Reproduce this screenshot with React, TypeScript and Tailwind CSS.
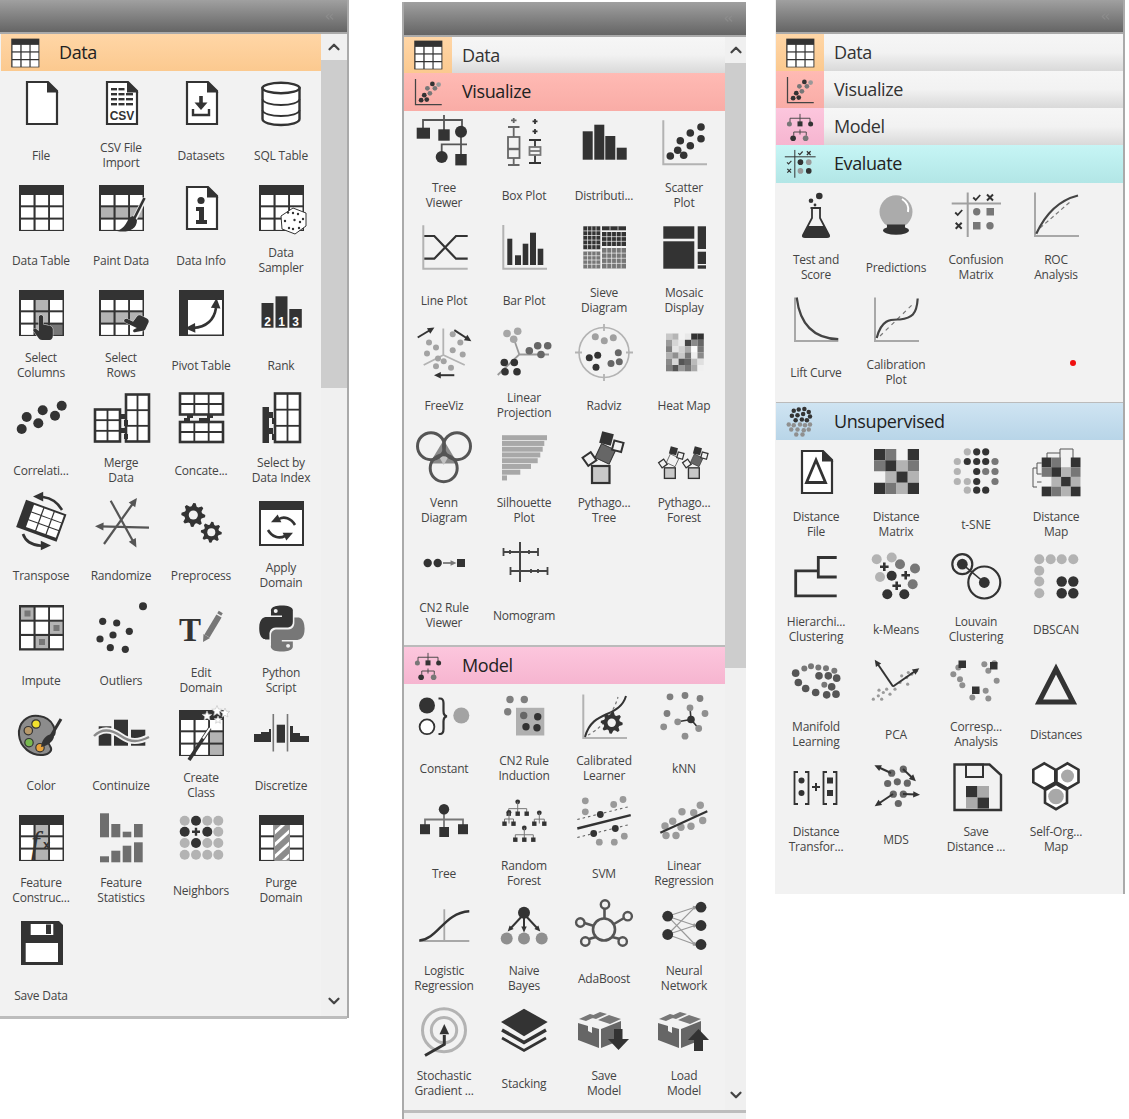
import type { ReactNode } from 'react'
import { ChevronDown, ChevronUp, ChevronsLeft } from 'lucide-react'

const D = '#333333'
const M = '#777777'
const L = '#b3b3b3'
const W = '#ffffff'
const BG = '#f2f2f2'

type Pt = number[]

const R = (x: number, y: number, w: number, h: number, f = D) => <rect x={x} y={y} width={w} height={h} fill={f} />
const C = (x: number, y: number, r: number, f = D) => <circle cx={x} cy={y} r={r} fill={f} />
const S = (d: string, c = D, w = 2, dash?: string) => (
  <path d={d} fill="none" stroke={c} strokeWidth={w} strokeDasharray={dash} />
)
const F = (d: string, f = D) => <path d={d} fill={f} />

// zoomed crop coords -> icon coords
const Z = (cx: number, cy: number, pts: Pt[]) => pts.map(([x, y]) => [(x - cx) / 3 + 24, (y - cy) / 3 + 24])

const dots = (p: Pt[], r = 3.5, f = D) => (
  <>
    {p.map(([x, y], i) => (
      <circle key={i} cx={x} cy={y} r={r} fill={f} />
    ))}
  </>
)

const head = (x: number, y: number, a: number, s = 5, c = D) => (
  <polygon points={`${s},0 ${-s * 0.7},${s * 0.8} ${-s * 0.7},${-s * 0.8}`} fill={c} transform={`translate(${x} ${y}) rotate(${a})`} />
)

const arrow = (x1: number, y1: number, x2: number, y2: number, c = D, w = 2, s = 4) => {
  const a = (Math.atan2(y2 - y1, x2 - x1) * 180) / Math.PI
  return (
    <>
      <line x1={x1} y1={y1} x2={x2} y2={y2} stroke={c} strokeWidth={w} />
      {head(x2, y2, a, s, c)}
    </>
  )
}

const grid = (x: number, y: number, w: number, h: number, cols: number, rows: number, sw = 2.2, fill = W) => (
  <>
    <rect x={x} y={y} width={w} height={h} fill={fill} stroke={D} strokeWidth={sw} />
    {Array.from({ length: cols - 1 }, (_, i) => (
      <line key={i} x1={x + (w * (i + 1)) / cols} x2={x + (w * (i + 1)) / cols} y1={y} y2={y + h} stroke={D} strokeWidth={sw * 0.7} />
    ))}
    {Array.from({ length: rows - 1 }, (_, i) => (
      <line key={i} y1={y + (h * (i + 1)) / rows} y2={y + (h * (i + 1)) / rows} x1={x} x2={x + w} stroke={D} strokeWidth={sw * 0.7} />
    ))}
  </>
)

const mesh = (x: number, y: number, w: number, h: number, n: number, m: number, f: string) => (
  <>
    <rect x={x} y={y} width={w} height={h} fill={f} />
    {Array.from({ length: n - 1 }, (_, i) => (
      <line key={i} x1={x + (w * (i + 1)) / n} x2={x + (w * (i + 1)) / n} y1={y} y2={y + h} stroke={BG} strokeWidth={0.7} />
    ))}
    {Array.from({ length: m - 1 }, (_, i) => (
      <line key={i} y1={y + (h * (i + 1)) / m} y2={y + (h * (i + 1)) / m} x1={x} x2={x + w} stroke={BG} strokeWidth={0.7} />
    ))}
  </>
)

const table = (fills: Record<string, string> = {}, top = true) => {
  const cols = [4, 18.6, 33]
  const rows = top ? [11, 23.3, 35.6] : [3.5, 17.7, 32]
  const h = top ? 10.3 : 12.2
  return (
    <>
      {R(2, 1, 45, top ? 46 : 45.5)}
      {rows.map((y, r) =>
        cols.map((x, c) => <rect key={`${r}${c}`} x={x} y={y} width={12.5} height={h} fill={fills[`${r}${c}`] ?? W} />),
      )}
    </>
  )
}

const fileBase = (
  <>
    <path d="M10 3H31L40 12V45H10Z" fill={W} stroke={D} strokeWidth={2.2} />
    {F('M30 2L41.5 13.5H30Z')}
  </>
)

const hand = (x: number, y: number, a: number, s = 1) => (
  <g transform={`translate(${x} ${y}) rotate(${a}) scale(${s}) translate(-12 -12)`}>
    <path
      d="M9 0c1.3 0 2.2 1 2.2 2.2v7.3l6.3 1.3c2.2.4 3.3 1.6 3.3 3.6V21c0 2.2-1.2 4-3.3 4H10c-1.6 0-2.7-.7-3.5-2L1.5 16c-1-1.4.9-3.2 2.4-2.2L6.8 16V2.2C6.8 1 7.7 0 9 0z"
      fill={D}
      stroke={BG}
      strokeWidth={0.8}
      paintOrder="stroke"
    />
  </g>
)

const gear = (cx: number, cy: number, r: number, n: number, f = D) => {
  const pts: string[] = []
  for (let i = 0; i < n * 4; i++) {
    const a = (i / (n * 4)) * Math.PI * 2
    const rr = i % 4 < 2 ? r : r * 0.74
    pts.push(`${cx + rr * Math.cos(a)},${cy + rr * Math.sin(a)}`)
  }
  return (
    <>
      <polygon points={pts.join(' ')} fill={f} />
      {C(cx, cy, r * 0.38, BG)}
    </>
  )
}

const star = (x: number, y: number, r: number) => {
  const pts: string[] = []
  for (let i = 0; i < 10; i++) {
    const a = -Math.PI / 2 + (i * Math.PI) / 5
    const rr = i % 2 ? r * 0.45 : r
    pts.push(`${x + rr * Math.cos(a)},${y + rr * Math.sin(a)}`)
  }
  return <polygon points={pts.join(' ')} fill={W} stroke="#c4c4c4" strokeWidth={0.7} />
}

const hex = (x: number, y: number, r: number) => {
  const pts: string[] = []
  for (let i = 0; i < 6; i++) {
    const a = -Math.PI / 2 + (i * Math.PI) / 3
    pts.push(`${x + r * Math.cos(a)},${y + r * Math.sin(a)}`)
  }
  return <polygon points={pts.join(' ')} fill={W} stroke={D} strokeWidth={2.6} />
}

const chk = (x: number, y: number) => S(`M${x - 3.5} ${y}l2.5 2.5 4.5-5`, D, 1.8)
const crs = (x: number, y: number) => S(`M${x - 3} ${y - 3}l6 6m0-6l-6 6`, D, 2)

const miniTree = (cx: number, y: number, w: number, y2: number) => (
  <>
    {C(cx, y, 2.4)}
    {S(`M${cx} ${y}V${y2}M${cx - w} ${y2}V${(y + y2) / 2 + 1}H${cx + w}V${y2}`, M, 1)}
    {R(cx - w - 2.2, y2 - 2, 4.4, 4.4)}
    {R(cx + w - 2.2, y2 - 2, 4.4, 4.4)}
  </>
)

const cubePack = (
  <>
    {F('M-1 12L10 7L17 9L6 14ZM20 5L27 7L16 12L9 10ZM29 8L41 12L30 17L18 13Z', M)}
    {F('M-2 16L8 19V24L12 26V20L19 22V41L-2 33Z', '#666666')}
    {F('M21 22L41 14V33L21 41Z', '#666666')}
  </>
)

const pyth = (big: string, mid: string, tip: string) => (
  <>
    <rect x={12} y={32} width={17.5} height={17} fill={big} stroke={D} strokeWidth={2.2} />
    <rect x={17.5} y={12} width={15.5} height={15.5} fill={mid} stroke={D} strokeWidth={1} transform="rotate(25 25 20)" />
    <rect x={20.5} y={-1.5} width={12} height={12} fill={tip} transform="rotate(15 26.5 4.5)" />
    <rect x={33} y={7.5} width={9.5} height={9.5} fill={BG} stroke={D} strokeWidth={2} transform="rotate(15 37.7 12.2)" />
    <rect x={4.5} y={20} width={10} height={10} fill={BG} stroke={D} strokeWidth={2} transform="rotate(-35 9.5 25)" />
  </>
)

const heatCells = [
  ['#c8c8c8', '#b5b5b5', '#f2f2f2', '#e8e8e8', '#333333', '#333333'],
  ['#9a9a9a', '#d5d5d5', '#e8e8e8', '#444444', '#8a8a8a', '#666666'],
  ['#808080', '#e4e4e4', '#d0d0d0', '#aaaaaa', '#fafafa', '#777777'],
  ['#b0b0b0', '#8f8f8f', '#c8c8c8', '#777777', '#eeeeee', '#8a8a8a'],
  ['#8a8a8a', '#d8d8d8', '#555555', '#666666', '#bbbbbb', '#e0e0e0'],
  ['#808080', '#555555', '#999999', '#777777', '#aaaaaa', '#f0f0f0'],
]

const m4 = [
  [D, M, BG, D],
  [M, D, L, M],
  [BG, L, D, L],
  [D, M, L, D],
]

const matrix = (x: number, y: number, s: number) =>
  m4.map((row, r) => row.map((f, c) => <rect key={`${r}${c}`} x={x + c * s} y={y + r * s} width={s} height={s} fill={f} />))

const icons: Record<string, ReactNode> = {
  file: fileBase,
  csv: (
    <>
      {fileBase}
      {[9, 14, 19, 24].map((y) => (
        <g key={y}>
          {R(14, y, 6, 2.4)}
          {R(21.5, y, 6, 2.4)}
          {y > 9 && R(29, y, 7, 2.4)}
        </g>
      ))}
      <text x={25} y={41} textAnchor="middle" fontFamily="Liberation Sans, sans-serif" fontWeight={700} fontSize={12} fill={D}>
        CSV
      </text>
    </>
  ),
  datasets: (
    <>
      {fileBase}
      {R(22.2, 17, 3.6, 7)}
      {F('M17.5 23.5H30.5L24 31Z')}
      {S('M16 30V36H32V30', D, 2.4)}
    </>
  ),
  sql: (
    <>
      <path d="M5.5 9V40C5.5 43.5 14 46 24 46S42.5 43.5 42.5 40V9Z" fill={W} stroke={D} strokeWidth={2.4} />
      <ellipse cx={24} cy={9} rx={18.5} ry={5.2} fill={W} stroke={D} strokeWidth={2.4} />
      {S('M5.5 20C5.5 23.5 14 26 24 26S42.5 23.5 42.5 20', D, 1.8)}
      {S('M5.5 31C5.5 34.5 14 37 24 37S42.5 34.5 42.5 31', D, 1.8)}
    </>
  ),
  dataTable: table(),
  paintData: (
    <>
      {table({ 10: L, 11: L, 12: L })}
      {S('M48 14L37 36', BG, 5)}
      {S('M47.5 14L37 35', D, 2.6)}
      {F('M36 32C29 34 31 43 20 47C30 49 40 46 40 36Z')}
    </>
  ),
  dataInfo: (
    <>
      {fileBase}
      {C(24, 16.5, 3.6)}
      {F('M19 23H27V36H30V40H19V36H22V27H19Z')}
    </>
  ),
  dataSampler: (
    <>
      {table()}
      <polygon points="36,24 49,29 49,42 38,50 25,45 24,32" fill={W} stroke={D} strokeWidth={1} />
      {dots([[36, 29], [31, 28.5], [41, 30], [28, 37], [32, 44], [37.5, 36], [43, 38], [42, 44], [46, 35], [36, 45]], 1.2)}
    </>
  ),
  selectColumns: (
    <>
      {table({ '01': L, 11: L, 21: L, 22: M })}
      {hand(27, 38, 0, 1)}
    </>
  ),
  selectRows: (
    <>
      {table({ 10: L, 11: L, 12: L })}
      {hand(38.5, 33, -65, 0.92)}
    </>
  ),
  pivot: (
    <>
      {R(2, 1, 45, 46)}
      {R(11, 11, 34, 34.5, W)}
      {S('M16 39C29 38 37 32 39 19', D, 2.6)}
      {head(39, 15, -85, 6)}
      {head(14, 39, 178, 6)}
    </>
  ),
  rank: (
    <>
      {R(4.5, 14, 12, 24.7)}
      {R(18.5, 7.3, 12, 31.4)}
      {R(32.3, 20, 12.5, 18.7)}
      {[['2', 10.5], ['1', 24.5], ['3', 38.5]].map(([t, x]) => (
        <text key={t} x={x} y={36.5} textAnchor="middle" fontFamily="Liberation Sans, sans-serif" fontWeight={700} fontSize={12} fill={W}>
          {t}
        </text>
      ))}
    </>
  ),
  correlations: dots([[4.7, 35], [21.3, 29.3], [9.7, 23], [25.7, 16.3], [38, 21.7], [44.7, 11.7]], 5),
  merge: (
    <>
      {grid(-2, 15.5, 25, 32, 2, 3, 2.6)}
      {grid(29, 0.5, 23, 47, 2, 3, 2.6)}
      {R(23, 20, 6, 5)}
      {R(23, 34, 6, 5)}
      {R(27, 26, 4, 6)}
      {R(27, 40, 4, 5)}
    </>
  ),
  concat: (
    <>
      {grid(3, -0.5, 43, 21, 3, 2, 2.6)}
      {grid(3, 28, 43, 20, 3, 2, 2.6)}
      {[10, 30].map((x) => <g key={x}>{R(x, 20, 6, 4)}</g>)}
      {[20, 40].map((x) => <g key={x}>{R(x - 13, 24, 6, 4)}</g>)}
      {R(22, 24, 5, 4)}
    </>
  ),
  selectByIndex: (
    <>
      {grid(18, -0.5, 25, 48.5, 2, 3, 2.6)}
      {R(5.5, 13, 6.5, 36)}
      {R(12, 18, 4, 6)}
      {R(12, 34, 4, 6)}
      {R(15, 24, 4, 6)}
      {R(15, 40, 4, 6)}
    </>
  ),
  transpose: (
    <>
      <g transform="rotate(20 24.3 21.7)">
        {R(2.8, 7.2, 43, 29)}
        {[12, 23, 34].map((x) => [9.2, 17.4, 25.6].map((y) => <rect key={`${x}${y}`} x={x} y={y} width={9.8} height={7.2} fill={W} />))}
      </g>
      {S('M45 11C41 4 34 -1 26 -2', D, 2.6)}
      {head(22, -2.4, 180, 6)}
      {S('M6 35C8 41 14 46 24 46.7', D, 2.6)}
      {head(28, 46.5, 0, 6)}
    </>
  ),
  randomize: (
    <>
      {arrow(52, 28.7, 3, 27.3, '#555555', 2.2, 5)}
      {arrow(13.7, 1.7, 37, 44, '#555555', 2.2, 5)}
      {arrow(7, 45, 37, 3, '#555555', 2.2, 5)}
    </>
  ),
  preprocess: (
    <>
      {gear(16.3, 16, 12, 8)}
      {gear(34.3, 33.3, 10.5, 8)}
    </>
  ),
  applyDomain: (
    <>
      {R(2, 2, 45, 45)}
      {R(4, 11, 41, 34, W)}
      {S('M38 26C34 19 27 17 22 20', D, 2.6)}
      {head(19, 21, 155, 5.5)}
      {S('M11 31C15 38 22 40 28 37', D, 2.6)}
      {head(31, 36, -25, 5.5)}
    </>
  ),
  impute: (
    <>
      {table({ '00': L, 12: L, 21: L }, false)}
      {R(7.5, 6.5, 6, 6, M)}
      {R(36.5, 21, 6, 6, M)}
      {R(22, 35, 6, 6, M)}
    </>
  ),
  outliers: (
    <>
      {dots([[5.7, 17.3], [19.7, 19], [32.3, 27.3], [16, 31], [3, 35], [13.3, 43.7], [28.3, 45.3]], 3.6)}
      {C(46, 2.3, 4)}
    </>
  ),
  editDomain: (
    <>
      <text x={2} y={37} fontFamily="Liberation Serif, serif" fontWeight={700} fontSize={33} fill={D}>
        T
      </text>
      {S('M42 12L30 32', M, 6)}
      {F('M26.5 30L33 34L26 38Z', M)}
      {S('M41 8L45 10.5', M, 3)}
    </>
  ),
  python: (
    <g transform="translate(2.2 1.5) scale(1.9)">
      <path
        fillRule="evenodd"
        fill={D}
        d="M11.9 0C5.8 0 6.2 2.6 6.2 2.6v2.7h5.8v.8H3.9S0 5.7 0 11.9s3.4 6 3.4 6h2v-2.9s-.1-3.4 3.4-3.4h5.7s3.2.1 3.2-3.1V3.2S18.8 0 11.9 0zM8.7 1.9a1 1 0 110 2.1 1 1 0 010-2.1z"
      />
      <path
        fillRule="evenodd"
        fill={M}
        transform="rotate(180 11.95 12.1)"
        d="M11.9 0C5.8 0 6.2 2.6 6.2 2.6v2.7h5.8v.8H3.9S0 5.7 0 11.9s3.4 6 3.4 6h2v-2.9s-.1-3.4 3.4-3.4h5.7s3.2.1 3.2-3.1V3.2S18.8 0 11.9 0zM8.7 1.9a1 1 0 110 2.1 1 1 0 010-2.1z"
      />
    </g>
  ),
  color: (
    <>
      <path d="M22 7C10 5 1 14 2 26C3 38 14 47 26 46C33 45 36 41 33 37C30 33 31 29 36 27C40 25 38 9 22 7Z" fill="#8c8c8c" stroke={D} strokeWidth={2} />
      {[[19, 15, '#f2e22e'], [11.3, 21.7, '#b89a6a'], [12, 33.7, '#78b84f'], [23, 38.7, '#eaa43c']].map(([x, y, f]) => (
        <circle key={f as string} cx={x} cy={y} r={4.2} fill={f as string} stroke={D} strokeWidth={1.2} />
      ))}
      {S('M44 10L34 27', D, 3)}
      {F('M35 25C29 26 25 30 24 38C30 37 36 33 37 28Z')}
    </>
  ),
  continuize: (
    <>
      {R(1.7, 17.3, 12.6, 19.4)}
      {R(17, 10.7, 14, 26)}
      {R(34, 20.7, 14.3, 16)}
      {S('M-3 27C5 19 14 20 24 27S42 33 52 28', BG, 6)}
      {S('M-3 27C5 19 14 20 24 27S42 33 52 28', '#8a8a8a', 2.4)}
    </>
  ),
  createClass: (
    <>
      {table({ 12: L, 22: L })}
      {S('M12 51L33 19', D, 3.6)}
      {S('M26 29.5L33 19', W, 2)}
      {star(30, 7, 5)}
      {star(40, 2, 5.5)}
      {star(48, 4, 5)}
      {star(41, 11, 4)}
    </>
  ),
  discretize: (
    <>
      {F('M-3 25H4V23H12V20H14V33H-3Z')}
      {R(19.7, 15.7, 8.3, 18)}
      {F('M33 17H36V24H43V27H52V33H33Z')}
      {R(15.5, 5, 1.6, 37.5, M)}
      {R(29.7, 5, 1.6, 37.5, M)}
    </>
  ),
  featureConstructor: (
    <>
      {table({ '01': L, 11: L, 21: L })}
      <text x={14} y={39} fontFamily="Liberation Serif, serif" fontStyle="italic" fontSize={31} fill={D}>
        f
      </text>
      <text x={26} y={35} fontFamily="Liberation Sans, sans-serif" fontWeight={700} fontSize={13} fill={D}>
        x
      </text>
    </>
  ),
  featureStats: (
    <>
      {R(3, -0.7, 9, 24, '#6e6e6e')}
      {R(14.3, 10, 9, 13.3, '#6e6e6e')}
      {R(25.7, 17.7, 8.6, 5.6, '#6e6e6e')}
      {R(37, 10, 8.7, 13.3, '#6e6e6e')}
      {R(3, 42.3, 9, 6, '#6e6e6e')}
      {R(14.3, 36.7, 9, 11.6, '#6e6e6e')}
      {R(25.7, 31.7, 8.6, 16.6, '#6e6e6e')}
      {R(37, 28.3, 8.7, 20, '#6e6e6e')}
    </>
  ),
  neighbors: (
    <>
      {dots([[7.7, 6.7], [30.3, 6.7], [41.3, 6.7], [41.3, 17.7], [7.7, 29], [30.3, 29], [41.3, 29], [7.7, 40.7], [19, 40.7], [30.3, 40.7], [41.3, 40.7]], 5, L)}
      {dots([[19, 6.7], [7.7, 17.7], [30.3, 17.7], [19, 29]], 5)}
      {S('M15 17.7H23M19 13.7V21.7', D, 2.4)}
    </>
  ),
  purge: (
    <>
      {table()}
      <clipPath id="purgeClip">
        <rect x={17.5} y={11} width={15} height={35.5} />
      </clipPath>
      <g clipPath="url(#purgeClip)">
        {R(16, 11, 18, 36, W)}
        {[8, 20, 32, 44, 56].map((y) => (
          <path key={y} d={`M14 ${y + 8}L38 ${y - 14}`} stroke="#8c8c8c" strokeWidth={6} />
        ))}
      </g>
    </>
  ),
  saveData: (
    <>
      {F('M4 2H42L46 6V46H4Z')}
      {R(13.7, 5, 22.6, 11, W)}
      {R(29, 5.5, 5, 9.5)}
      {R(8.7, 24, 32.3, 19, W)}
    </>
  ),
  treeViewer: (
    <>
      {S('M3 11V1H42V8M24 -4V12M21.7 38V25.3H47M41 18V25.3M41 25.3V38', '#555555', 1.8)}
      {R(-3.3, 8.7, 13.3, 11)}
      {R(18.3, 10.3, 11.4, 11.4)}
      {C(41, 12.7, 6)}
      {C(21.7, 38, 6)}
      {R(35.3, 35, 11.4, 11.4)}
    </>
  ),
  boxPlot: (
    <>
      {S('M13.7 -1V4M11 1.3H16.5M8 8H19.5M13.7 8V18M13.7 39V46M8 46H19.5', '#666666', 1.8)}
      <rect x={8} y={18} width={11.5} height={21} fill="none" stroke="#666666" strokeWidth={1.8} />
      {S('M8 30H19.5', '#666666', 2.4)}
      {S('M35 0V5M32.5 2.3H37.5M35 10V15M32.5 12.3H37.5M29 21H41M35 21V28M35 36V44M29 44H41', D, 1.8)}
      <rect x={29.5} y={28} width={11} height={8} fill="none" stroke={M} strokeWidth={1.8} />
      {S('M29.5 32H40.5', M, 1.8)}
    </>
  ),
  distributions: (
    <>
      {R(2.7, 12.3, 10, 28.4)}
      {R(14.3, 5.7, 10, 35)}
      {R(25.3, 17, 10, 23.7)}
      {R(36.7, 28.7, 10, 12)}
    </>
  ),
  scatter: (
    <>
      {S('M3.3 1.3V45.3H47', L, 2)}
      {dots([[10.3, 37], [17.7, 31.3], [23.7, 36.3], [20.3, 21.7], [30.3, 14], [30.3, 26.7], [41, 8], [41, 19.7]], 3.8)}
    </>
  ),
  linePlot: (
    <>
      {S('M3.3 1.3V44.7H47.7', L, 2)}
      {S('M4.3 12H14.3L36 34.7H47.7M4.3 34.7H14.3L36 12H47.7', D, 2.2)}
    </>
  ),
  barPlot: (
    <>
      {S('M3.3 1V44.7H47', L, 2)}
      {R(7.3, 14.7, 5, 26.3)}
      {R(15, 31.3, 6, 9.7)}
      {R(22.7, 19.7, 5.6, 21.3)}
      {R(30, 8.7, 6, 32.3)}
      {R(37.7, 24.7, 5.6, 16.3)}
    </>
  ),
  sieve: (
    <>
      {mesh(3.3, 2.3, 17, 23, 4, 5, D)}
      {mesh(22, 2.3, 24, 4, 3, 1, D)}
      {mesh(22, 8, 24, 14, 5, 3, D)}
      {mesh(3.3, 27.5, 17, 17, 4, 4, '#777777')}
      {mesh(22, 24, 24, 20.5, 5, 4, '#777777')}
    </>
  ),
  mosaic: (
    <>
      {R(3.3, 2.3, 31, 12.4)}
      {R(3.3, 17.3, 31, 27.4)}
      {R(37.7, 2.3, 8.3, 22.7)}
      {R(37.7, 27.7, 8.3, 12.3)}
      {R(37.7, 41.3, 8.3, 3.4)}
    </>
  ),
  freeviz: (
    <>
      {S('M23.3 -0.5V26L3.7 36M23.3 26L44.7 36', L, 1.8)}
      {arrow(-2.3, 8.5, 11, 0.5)}
      {arrow(34.3, 1.2, 48, 10)}
      {arrow(34.3, 46.2, 18, 46.2)}
      {dots([[9, 13.5], [16, 18.5], [7, 24.5], [18, 29.5], [32.7, 5.2], [40.3, 13.5], [32.7, 21.2], [42.7, 25.5], [23.7, 32.2], [16, 37.2], [31, 38.8]], 3, '#a3a3a3')}
    </>
  ),
  linProj: (
    <>
      {S('M-2.3 46L19.3 25.5L14 10.2M19.3 25.5H49', '#999999', 1.8)}
      {dots([[7, 4.5], [17.7, 2.2], [13.7, 10.2]], 3.8, '#a6a6a6')}
      {dots([[29.3, 21.8], [37.7, 16.8], [47.7, 16.8], [41, 25.5]], 3.8, '#666666')}
      {dots([[4.3, 33.5], [14.3, 33.5], [5, 42.8], [17, 42.8]], 3.8)}
    </>
  ),
  radviz: (
    <>
      <circle cx={24} cy={23.5} r={25} fill="none" stroke={L} strokeWidth={1.6} />
      {S('M24 -5V2M24 45V52M-5 23.5H2M46 23.5H53', L, 1.8)}
      {dots([[15.3, 7.8], [24.3, 11.8], [33.3, 8.8]], 3.5, '#a0a0a0')}
      {dots([[38.3, 23.8], [31, 34.5], [39.3, 32.8]], 3.5, '#666666')}
      {dots([[9.3, 28.8], [17.7, 26.2], [16, 38.2]], 3.5)}
    </>
  ),
  heatmap: (
    <>
      {heatCells.map((row, r) => row.map((f, c) => <rect key={`${r}${c}`} x={6 + c * 6.3} y={4.5 + r * 6.3} width={6.3} height={6.3} fill={f} />))}
    </>
  ),
  venn: (
    <>
      {F('M23.7 6L9.5 29.5H37.7Z', '#8a8a8a')}
      {F('M17.5 20H30L23.7 31Z', '#c2c2c2')}
      {[[11, 12.2], [37, 12.2], [23.7, 34.2]].map(([x, y]) => (
        <circle key={x} cx={x} cy={y} r={13.5} fill="none" stroke="#555555" strokeWidth={3} />
      ))}
    </>
  ),
  silhouette: (
    <>
      {[45, 42.3, 40.7, 38.3, 35.7, 29, 18.3, 5].map((w, i) => (
        <rect key={i} x={2} y={1.2 + i * 5.75} width={w} height={5} fill="#a8a8a8" />
      ))}
    </>
  ),
  pythTree: pyth('#c8c8c8', '#666666', D),
  pythForest: (
    <>
      <g transform="translate(-3 14) scale(.62)">{pyth('#c8c8c8', BG, D)}</g>
      <g transform="translate(21 14) scale(.62)">{pyth('#c8c8c8', '#666666', D)}</g>
    </>
  ),
  cn2viewer: (
    <>
      {C(7.7, 24, 4.2)}
      {C(17.7, 24, 4.2)}
      {arrow(23, 24, 33, 24, M, 1.8, 3.5)}
      {R(37, 20, 8, 8)}
    </>
  ),
  nomogram: (
    <>
      {S('M20 3V43M3 13H38M10.3 32H47.7', '#444444', 2)}
      {S('M3.5 9V17M10 11V15M29 11V15M38 9V17M10.5 28V36M31 30V34M38 30V34M47.5 28V36', '#444444', 1.8)}
    </>
  ),
  constant: (
    <>
      {C(7, 13.5, 8)}
      <circle cx={7} cy={34.8} r={7.4} fill={W} stroke={D} strokeWidth={1.8} />
      {S('M18.5 6.5H20C23 6.5 23.5 8.5 23.5 11V19C23.5 22 24.5 24 27 24.3C24.5 24.6 23.5 26.5 23.5 29.5V37C23.5 40 23 42 20 42H18.5', D, 2.2)}
      {C(41.3, 23.5, 8, '#a3a3a3')}
    </>
  ),
  cn2induction: (
    <>
      {R(16, 15.8, 28.3, 27.7, '#b0b0b0')}
      {dots([[37.7, 24.8], [26, 34.8], [37, 35.8]], 3.7)}
      {C(23.7, 23.5, 3.7, '#666666')}
      {dots([[10, 7.5], [24.3, 7.5], [7.7, 19.8]], 3.7, '#7f7f7f')}
    </>
  ),
  calibrated: (
    <>
      {S('M3.3 2.5V46H47', L, 2)}
      {S('M5 45C9 30 18 26 27 22C36 18 43 14 46 4', D, 2)}
      {S('M8 43C18 38 32 26 38 5', M, 1.2, '3 3')}
      {gear(31.7, 30.8, 11, 8)}
    </>
  ),
  knn: (
    <>
      {S('M31 27.5L30 15.8M31 27.5L17.7 29.8M31 27.5L38.7 36.5', D, 1.6)}
      {dots([[10, 4.8], [25, 3.5], [40, 6.5], [7, 21.5]], 3.4, '#7f7f7f')}
      {dots([[45, 21.5], [38.7, 36.5], [25, 44.2], [3.7, 34.8], [17.7, 29.8], [30, 15.8]], 3.4, '#8f8f8f')}
      {C(31, 27.5, 3.8)}
    </>
  ),
  tree: (
    <>
      {S('M24 12V32M5 30V22.5H43V30', M, 1.8)}
      {C(24, 12.3, 5.2)}
      {R(0, 27.2, 10, 10)}
      {R(19.3, 30, 9.7, 10)}
      {R(38, 27.2, 10, 10)}
    </>
  ),
  randomForest: (
    <>
      {miniTree(17.7, 4.8, 9, 16.5)}
      {R(15.5, 14.5, 4.4, 4.4)}
      {miniTree(9, 15.5, 4.5, 26.5)}
      {miniTree(39.3, 15.8, 5, 26.5)}
      {miniTree(24.3, 31, 9, 42.5)}
      {R(22.1, 40.5, 4.4, 4.4)}
    </>
  ),
  svm: (
    <>
      {S('M-2.7 31.5L50.7 18.2', D, 2.4)}
      {S('M-2.7 22.5L50.7 9.2M-2.7 40.5L50.7 27.2', '#666666', 1.1, '2.5 3')}
      {dots([[5.3, 3.8], [33.7, 7.5], [43, 2.5], [5.3, 14.8], [19.3, 45.2], [34.3, 45.2], [44.3, 39.2]], 3.4, '#9a9a9a')}
      {dots([[20.3, 17.5], [13.7, 36.5], [35.3, 31.5]], 3.4)}
    </>
  ),
  linReg: (
    <>
      {dots([[5, 29], [12.7, 24.2], [22, 14.8], [33.7, 15.8], [40.3, 8.2], [42.7, 23.5], [31, 29.2], [21, 30.2], [6, 38.5], [16, 38.5]], 3.7, '#9a9a9a')}
      {S('M0.3 35.8L47.3 14.2', D, 2.2)}
    </>
  ),
  logReg: (
    <>
      {S('M24.3 7.3V39M-0.7 39H49.3', '#a8a8a8', 1.8)}
      {S('M-0.7 38.5C17.7 37.5 24 10.8 49.3 9.2', D, 2.4)}
    </>
  ),
  naiveBayes: (
    <>
      {dots([[6.7, 36.5], [24, 36.5], [41.7, 36.5]], 6, '#8f8f8f')}
      {arrow(24, 12, 10, 27, D, 2, 3.4)}
      {arrow(24, 12, 24, 27, D, 2, 3.4)}
      {arrow(24, 12, 38, 27, D, 2, 3.4)}
      {C(24, 10.8, 6)}
    </>
  ),
  adaboost: (
    <>
      {S('M24.5 16V7M34 22L44 16M32 35L40 37M16 35L9 37M14 24L4.5 21', '#555555', 2.6)}
      <circle cx={24} cy={27.5} r={11} fill="none" stroke="#555555" strokeWidth={2.6} />
      {[[25, 2.5], [47.7, 14.2], [0.3, 20.5], [5.3, 39.5], [42.7, 39.5]].map(([x, y]) => (
        <circle key={x} cx={x} cy={y} r={4.2} fill="none" stroke="#555555" strokeWidth={2.4} />
      ))}
    </>
  ),
  nn: (
    <>
      {[[7.7, 14.2], [7.7, 32.5]].map(([x, y]) =>
        [5.2, 23.5, 42.5].map((t) => <g key={`${y}${t}`}>{arrow(x, y, 35, t, '#999999', 1.2, 2.5)}</g>),
      )}
      {dots([[41, 5.2], [41, 23.5], [41, 42.5], [7.7, 14.2], [7.7, 32.5]], 5.4)}
    </>
  ),
  sgd: (
    <>
      <circle cx={24} cy={23.2} r={21.5} fill="none" stroke={L} strokeWidth={3} />
      <circle cx={24} cy={23.2} r={12.7} fill="none" stroke={L} strokeWidth={3} />
      {S('M5 48.5L24.3 37.5V28', D, 3)}
      {head(24.3, 23, -90, 6)}
    </>
  ),
  stacking: (
    <>
      {F('M24 1.8L47.7 15L24 29.2L1 15Z')}
      {S('M2 23L24 35.5L46 23', D, 3.4)}
      {S('M2 31L24 43.5L46 31', D, 2.6)}
    </>
  ),
  saveModel: (
    <>
      {cubePack}
      {R(34, 22, 8.5, 11, D)}
      {F('M28 32H49L38.5 43Z')}
    </>
  ),
  loadModel: (
    <>
      {cubePack}
      {F('M28 33L38.5 22L49 33Z')}
      {R(34, 33, 9, 11, D)}
    </>
  ),
  testScore: (
    <>
      {S('M18.5 17H29M20 17V27L11 44C10.5 45.5 11 46 13 46H35C37 46 37.5 45.5 37 44L28 27V17', D, 1.8)}
      {F('M16 35H32L37 44C37.5 45.5 37 46 35 46H13C11 46 10.5 45.5 11 44Z')}
      {C(19, 9.8, 2.3)}
      {C(27.3, 5, 3.3)}
      {C(23, 14, 1.4)}
    </>
  ),
  predictions: (
    <>
      {C(24, 20.8, 16.5, '#ababab')}
      {S('M30 8C35 11 37 16 36 21', W, 2)}
      <ellipse cx={24} cy={39.5} rx={13} ry={4.2} fill={D} />
      {R(15, 33.5, 18, 5)}
    </>
  ),
  confusion: (
    <>
      {S('M15.7 1.5V46M-0.3 12.5H49', '#a0a0a0', 2)}
      {chk(24.7, 6.5)}
      {crs(38, 6.5)}
      {chk(6.7, 21.5)}
      {crs(6.7, 34.8)}
      {C(24.7, 20.8, 3.7, M)}
      {R(34.5, 17, 7.5, 7.5, M)}
      {R(21, 31, 7.5, 7.5, M)}
      {C(38, 34.8, 3.7, M)}
    </>
  ),
  roc: (
    <>
      {S('M3 1.5V45H47', '#a8a8a8', 2)}
      {S('M8 37L38 11', M, 1.2, '4 3')}
      {S('M4.3 42.8C12.7 24.5 26 9.5 46 4.5', '#444444', 2.2)}
    </>
  ),
  lift: (
    <>
      {S('M3 1.5V45H46.3', '#a8a8a8', 2)}
      {S('M4.7 1.5C8 29 23 42.5 46.3 43.2', '#444444', 2.2)}
    </>
  ),
  calibrationPlot: (
    <>
      {S('M3 1.5V45H47', '#a8a8a8', 2)}
      {S('M8 40L42 7', M, 1.2, '4 4')}
      {S('M4.7 42C9.7 22 19.7 23.5 28 23.5C39.7 22 44.7 18.8 45.7 2.5', '#444444', 2.2)}
    </>
  ),
  distFile: (
    <>
      {fileBase}
      {S('M24 12L33.5 34.5H14.5Z', D, 2.8)}
    </>
  ),
  distMatrix: <>{matrix(2, 1, 11.25)}</>,
  tsne: (
    <>
      {dots([[15.3, 3.8], [5.3, 13.5], [5.3, 23.5], [5.3, 33.5], [15.3, 33.5], [15.3, 42.2]], 3.6, L)}
      {dots([[24.7, 3.8], [33.7, 3.8], [15.3, 13.5], [24.7, 13.5], [33.7, 13.5], [24.7, 23.5], [24.7, 33.5], [24.7, 42.2], [33.7, 42.2]], 3.6)}
      {dots([[43, 13.5], [33.7, 23.5], [43, 23.5], [43, 33.5]], 3.6, M)}
    </>
  ),
  distMap: (
    <>
      {S('M15 10V5H28V1H41V5M28 5V10M41 5V10M9.7 15H5V26H9.7M5 20H1V39H5M5 34H9.7', '#555555', 1)}
      {matrix(9.7, 9.5, 9.7)}
    </>
  ),
  hierarchical: S('M44.7 4.5H26.3V24H44.7M26.3 17.8H3.7V42.8H44.7', D, 2.8),
  kmeans: (
    <>
      {dots([[4.7, 6.2], [19.7, 4.5], [8, 24]], 5, L)}
      {dots([[28, 11.2], [43, 15.5], [40.7, 31.2]], 5, M)}
      {dots([[19.7, 22.8], [15.3, 41.2], [32.3, 41.2]], 5)}
      {S('M8 13.8H16.6M12.3 9.5V18M29.4 22.2H38M33.7 18V26.5M20.4 32.8H29M24.7 28.5V37', D, 2.6)}
    </>
  ),
  louvain: (
    <>
      <circle cx={10.3} cy={11.2} r={10} fill="none" stroke={D} strokeWidth={2.2} />
      <circle cx={32.3} cy={29.5} r={16} fill="none" stroke={D} strokeWidth={2.2} />
      {S('M10.3 11.2L32.3 29.5', D, 1.6)}
      {C(10.3, 11.2, 5.4)}
      {C(32.3, 29.5, 5.4)}
    </>
  ),
  dbscan: (
    <>
      {dots([[7.3, 6.2], [18.7, 6.2], [29.7, 6.2], [41.3, 6.2], [7.3, 17.8], [7.3, 28.5], [7.3, 40.2]], 5, L)}
      {dots([[29.7, 28.5], [41.3, 28.5], [29.7, 40.2], [41.3, 40.2]], 5.2)}
    </>
  ),
  manifold: (
    <>
      {dots(Z(123, 823.5, [[88, 783], [108, 776], [130, 780], [153, 782], [178, 790], [148, 832]]), 3, '#777777')}
      {dots(Z(123, 823.5, [[62, 797], [132, 805], [160, 805], [185, 812], [170, 838], [70, 825], [92, 843], [122, 855], [155, 862], [183, 860]]), 3.8, '#555555')}
    </>
  ),
  pca: (
    <>
      {dots(Z(363, 823.5, [[295, 875], [310, 865], [325, 855], [320, 875], [335, 845], [345, 860], [375, 825], [395, 810], [410, 800], [425, 790], [400, 795], [380, 805], [360, 845], [312, 848], [398, 830]]), 1.6, '#9a9a9a')}
      {arrow(21, 28.5, 5, 5, D, 2, 4)}
      {arrow(21, 28.5, 44, 12.5, D, 2, 4)}
    </>
  ),
  ca: (
    <>
      {dots(Z(603, 823.5, [[550, 780], [535, 800], [555, 815], [562, 833], [628, 770], [658, 767], [640, 790], [665, 820], [605, 850], [632, 850], [592, 870], [640, 873]]), 3, '#8f8f8f')}
      {R(6.5, 2.5, 7.5, 7.5)}
      {R(38, 4, 7.5, 7.5)}
      {R(20, 28.5, 7.5, 7.5)}
    </>
  ),
  distances: <path d="M24 11L41 44H7Z" fill="none" stroke={D} strokeWidth={5} />,
  distTransform: (
    <>
      {S('M6 9H2.5V41H6M13 9H16.5V41H13M35 9H31.5V41H35M41 9H44.5V41H41', D, 1.8)}
      {C(9.5, 17.5, 3)}
      {C(9.5, 30, 3)}
      {S('M20 24H28M24 20V28', D, 2)}
      {R(35, 14.5, 6, 6)}
      {R(35, 27, 6, 6)}
    </>
  ),
  mds: (
    <>
      {dots(Z(363, 1138.5, [[350, 1097], [385, 1085], [338, 1128], [367, 1123], [397, 1127], [355, 1160], [385, 1160], [370, 1188]]), 3.6, '#666666')}
      {arrow(19, 10, 6, 4)}
      {arrow(31, 6, 41, 15.5)}
      {arrow(21, 31, 6, 41)}
      {arrow(31, 31, 44, 31.5)}
    </>
  ),
  saveDist: (
    <>
      <path d="M2.5 1.5H37.5L49 12V47H2.5Z" fill="none" stroke={D} strokeWidth={2.4} />
      <rect x={14} y={1.5} width={17} height={12.5} fill="none" stroke={D} strokeWidth={2} />
      {R(14, 23, 11.5, 11.5)}
      {R(25.5, 23, 11.5, 11.5, '#aaaaaa')}
      {R(14, 34.5, 11.5, 11, '#aaaaaa')}
      {R(25.5, 34.5, 11.5, 11)}
    </>
  ),
  som: (
    <>
      {hex(12.3, 13, 12.7)}
      {hex(35.5, 13, 12.7)}
      {C(35.5, 13, 6.5, '#a8a8a8')}
      {hex(24, 33.5, 12.7)}
      {C(24, 33.5, 7.8, '#a8a8a8')}
    </>
  ),
  catVisualize: (
    <>
      {S('M4 3V44H46', '#444444', 2)}
      {dots([[13, 37], [22, 36], [18, 29]], 3.8)}
      {dots([[27, 26], [23, 18], [35, 18]], 3.8, '#777777')}
      {C(31, 11, 3.8)}
      {C(41, 12, 3.8, '#999999')}
    </>
  ),
  catModel: (
    <>
      {S('M24 3V18M8 16V10H40V16M24 28V36M14 38V32H34V38', '#444444', 1.5)}
      {C(7, 19, 4, '#777777')}
      {R(20, 15, 8, 8)}
      {C(41, 19, 4, '#333333')}
      {C(13, 42, 4.5)}
      {C(33, 42, 4.5, '#777777')}
    </>
  ),
  catEvaluate: (
    <>
      {S('M15.7 1.5V46M-0.3 12.5H49', D, 1.6)}
      {chk(24.7, 6.5)}
      {crs(38, 6.5)}
      {chk(6.7, 21.5)}
      {crs(6.7, 34.8)}
      {C(24.7, 21, 4.5)}
      {C(38, 21, 4.5, '#999999')}
      {C(24.7, 35, 4.5, '#999999')}
      {C(38, 35, 4.5)}
    </>
  ),
  catUnsupervised: (
    <>
      {dots([[14, 6], [22, 4], [31, 3], [38, 8], [11, 14], [20, 13], [29, 11], [40, 15], [17, 21], [27, 20], [35, 21]], 3.6)}
      {dots([[6, 28], [14, 29], [24, 28], [32, 29], [40, 28], [10, 36], [20, 36], [30, 37], [38, 36], [18, 44], [28, 44]], 3.6, '#8f8f8f')}
    </>
  ),
}

type Widget = [string, string]

const dataWidgets: Widget[] = [
  ['file', 'File'], ['csv', 'CSV File\nImport'], ['datasets', 'Datasets'], ['sql', 'SQL Table'],
  ['dataTable', 'Data Table'], ['paintData', 'Paint Data'], ['dataInfo', 'Data Info'], ['dataSampler', 'Data\nSampler'],
  ['selectColumns', 'Select\nColumns'], ['selectRows', 'Select\nRows'], ['pivot', 'Pivot Table'], ['rank', 'Rank'],
  ['correlations', 'Correlati...'], ['merge', 'Merge\nData'], ['concat', 'Concate...'], ['selectByIndex', 'Select by\nData Index'],
  ['transpose', 'Transpose'], ['randomize', 'Randomize'], ['preprocess', 'Preprocess'], ['applyDomain', 'Apply\nDomain'],
  ['impute', 'Impute'], ['outliers', 'Outliers'], ['editDomain', 'Edit\nDomain'], ['python', 'Python\nScript'],
  ['color', 'Color'], ['continuize', 'Continuize'], ['createClass', 'Create\nClass'], ['discretize', 'Discretize'],
  ['featureConstructor', 'Feature\nConstruc...'], ['featureStats', 'Feature\nStatistics'], ['neighbors', 'Neighbors'], ['purge', 'Purge\nDomain'],
  ['saveData', 'Save Data'],
]

const visualizeWidgets: Widget[] = [
  ['treeViewer', 'Tree\nViewer'], ['boxPlot', 'Box Plot'], ['distributions', 'Distributi...'], ['scatter', 'Scatter\nPlot'],
  ['linePlot', 'Line Plot'], ['barPlot', 'Bar Plot'], ['sieve', 'Sieve\nDiagram'], ['mosaic', 'Mosaic\nDisplay'],
  ['freeviz', 'FreeViz'], ['linProj', 'Linear\nProjection'], ['radviz', 'Radviz'], ['heatmap', 'Heat Map'],
  ['venn', 'Venn\nDiagram'], ['silhouette', 'Silhouette\nPlot'], ['pythTree', 'Pythago...\nTree'], ['pythForest', 'Pythago...\nForest'],
  ['cn2viewer', 'CN2 Rule\nViewer'], ['nomogram', 'Nomogram'],
]

const modelWidgets: Widget[] = [
  ['constant', 'Constant'], ['cn2induction', 'CN2 Rule\nInduction'], ['calibrated', 'Calibrated\nLearner'], ['knn', 'kNN'],
  ['tree', 'Tree'], ['randomForest', 'Random\nForest'], ['svm', 'SVM'], ['linReg', 'Linear\nRegression'],
  ['logReg', 'Logistic\nRegression'], ['naiveBayes', 'Naive\nBayes'], ['adaboost', 'AdaBoost'], ['nn', 'Neural\nNetwork'],
  ['sgd', 'Stochastic\nGradient ...'], ['stacking', 'Stacking'], ['saveModel', 'Save\nModel'], ['loadModel', 'Load\nModel'],
]

const evaluateWidgets: Widget[] = [
  ['testScore', 'Test and\nScore'], ['predictions', 'Predictions'], ['confusion', 'Confusion\nMatrix'], ['roc', 'ROC\nAnalysis'],
  ['lift', 'Lift Curve'], ['calibrationPlot', 'Calibration\nPlot'],
]

const unsupervisedWidgets: Widget[] = [
  ['distFile', 'Distance\nFile'], ['distMatrix', 'Distance\nMatrix'], ['tsne', 't-SNE'], ['distMap', 'Distance\nMap'],
  ['hierarchical', 'Hierarchi...\nClustering'], ['kmeans', 'k-Means'], ['louvain', 'Louvain\nClustering'], ['dbscan', 'DBSCAN'],
  ['manifold', 'Manifold\nLearning'], ['pca', 'PCA'], ['ca', 'Corresp...\nAnalysis'], ['distances', 'Distances'],
  ['distTransform', 'Distance\nTransfor...'], ['mds', 'MDS'], ['saveDist', 'Save\nDistance ...'], ['som', 'Self-Org...\nMap'],
]

const colors = {
  data: 'from-[#ffd6a6] to-[#fbc98f]',
  visualize: 'from-[#ffbab4] to-[#f9aca6]',
  model: 'from-[#fcc6dd] to-[#f6b5d0]',
  evaluate: 'from-[#c6f5f5] to-[#b2e6e6]',
  unsupervised: 'from-[#cfe4f2] to-[#b8d5e8]',
}

function Icon({ name, size = 48 }: { name: string; size?: number }) {
  return (
    <svg viewBox="0 0 48 48" width={size} height={size} className="shrink-0 overflow-visible">
      {icons[name]}
    </svg>
  )
}

function Header({ icon, label, color, open, h = 'h-[37px]' }: { icon: string; label: string; color: string; open?: boolean; h?: string }) {
  return (
    <div className={`flex ${h} items-stretch ${open ? `bg-gradient-to-b ${color}` : 'bg-gradient-to-b from-[#f6f6f6] via-[#f2f2f2] to-[#d9d9d9]'}`}>
      <div className={`flex w-12 items-center justify-center ${open ? '' : `bg-gradient-to-b ${color}`}`}>
        <Icon name={icon} size={30} />
      </div>
      <span className={`pl-[10px] pt-[6px] text-[18px] leading-[24px] tracking-[-0.4px] ${open ? 'text-[#222]' : 'text-[#333]'}`}>{label}</span>
    </div>
  )
}

function Cell({ icon, label }: { icon: string; label: string }) {
  return (
    <div className="flex h-[105px] flex-col items-center pt-2">
      <Icon name={icon} />
      <div className="mt-3 flex h-8 w-[80px] items-center justify-center whitespace-pre-line text-center text-[12px] leading-[15px] tracking-[-0.2px] text-[#444]">
        {label}
      </div>
    </div>
  )
}

function Widgets({ items }: { items: Widget[] }) {
  return (
    <div className="grid w-[320px] grid-cols-4">
      {items.map(([icon, label]) => (
        <Cell key={label} icon={icon} label={label} />
      ))}
    </div>
  )
}

function TopBar({ h }: { h: string }) {
  return (
    <div className={`flex ${h} shrink-0 items-center justify-end border-b-2 border-[#aaa] bg-gradient-to-b from-[#a0a0a0] to-[#656565] pr-[11px]`}>
      <ChevronsLeft size={13} strokeWidth={2} className="text-[#8c8c8c]" />
    </div>
  )
}

function Scrollbar({ thumb, w }: { thumb: string; w: string }) {
  return (
    <div className={`flex ${w} shrink-0 flex-col bg-[#f0f0f0]`}>
      <div className="flex h-[26px] items-center justify-center">
        <ChevronUp size={18} strokeWidth={3} className="text-[#444]" />
      </div>
      <div className={`${thumb} bg-[#cdcdcd]`} />
      <div className="flex-1" />
      <div className="flex h-[30px] items-center justify-center">
        <ChevronDown size={18} strokeWidth={3} className="text-[#444]" />
      </div>
    </div>
  )
}

export default function App() {
  return (
    <div className="flex h-[1119px] w-[1129px] items-start overflow-hidden bg-white font-['Open_Sans',sans-serif]">
      <section className="flex h-[1018px] w-[349px] shrink-0 flex-col border-r-2 border-[#aaa] bg-[#f2f2f2]">
        <TopBar h="h-[34px]" />
        <div className="flex flex-1 pl-px">
          <div className="w-[321px]">
            <Header icon="dataTable" label="Data" color={colors.data} open />
            <Widgets items={dataWidgets} />
          </div>
          <Scrollbar thumb="h-[328px]" w="w-[26px]" />
        </div>
        <div className="h-[6px] border-t-[3px] border-[#bdbdbd] bg-[#f0f0f0]" />
      </section>

      <section className="ml-[53px] mt-[2px] flex h-[1117px] w-[344px] shrink-0 flex-col border-l-2 border-[#aaa] bg-[#f2f2f2]">
        <TopBar h="h-[35px]" />
        <div className="flex flex-1">
          <div className="w-[321px]">
            <Header icon="dataTable" label="Data" color={colors.data} h="h-[36px]" />
            <Header icon="catVisualize" label="Visualize" color={colors.visualize} open h="h-[38px]" />
            <Widgets items={visualizeWidgets} />
            <div className="mt-[9px] border-t-2 border-[#bbb]">
              <Header icon="catModel" label="Model" color={colors.model} open />
              <Widgets items={modelWidgets} />
            </div>
          </div>
          <Scrollbar thumb="h-[605px]" w="w-[21px]" />
        </div>
        <div className="h-[9px] border-t-[3px] border-[#bdbdbd] bg-[#f0f0f0]" />
      </section>

      <section className="ml-[29px] flex h-[894px] w-[350px] shrink-0 flex-col border-r-2 border-[#aaa] bg-[#f2f2f2] pl-px">
        <TopBar h="h-[34px]" />
        <Header icon="dataTable" label="Data" color={colors.data} />
        <Header icon="catVisualize" label="Visualize" color={colors.visualize} />
        <Header icon="catModel" label="Model" color={colors.model} />
        <Header icon="catEvaluate" label="Evaluate" color={colors.evaluate} open h="h-[38px]" />
        <div className="relative">
          <Widgets items={evaluateWidgets} />
          <span className="absolute left-[294px] top-[177px] size-[6px] rounded-full bg-[#f01010]" />
        </div>
        <div className="mt-[9px] border-t border-[#bbb]">
          <Header icon="catUnsupervised" label="Unsupervised" color={colors.unsupervised} open />
          <Widgets items={unsupervisedWidgets} />
        </div>
      </section>
    </div>
  )
}
